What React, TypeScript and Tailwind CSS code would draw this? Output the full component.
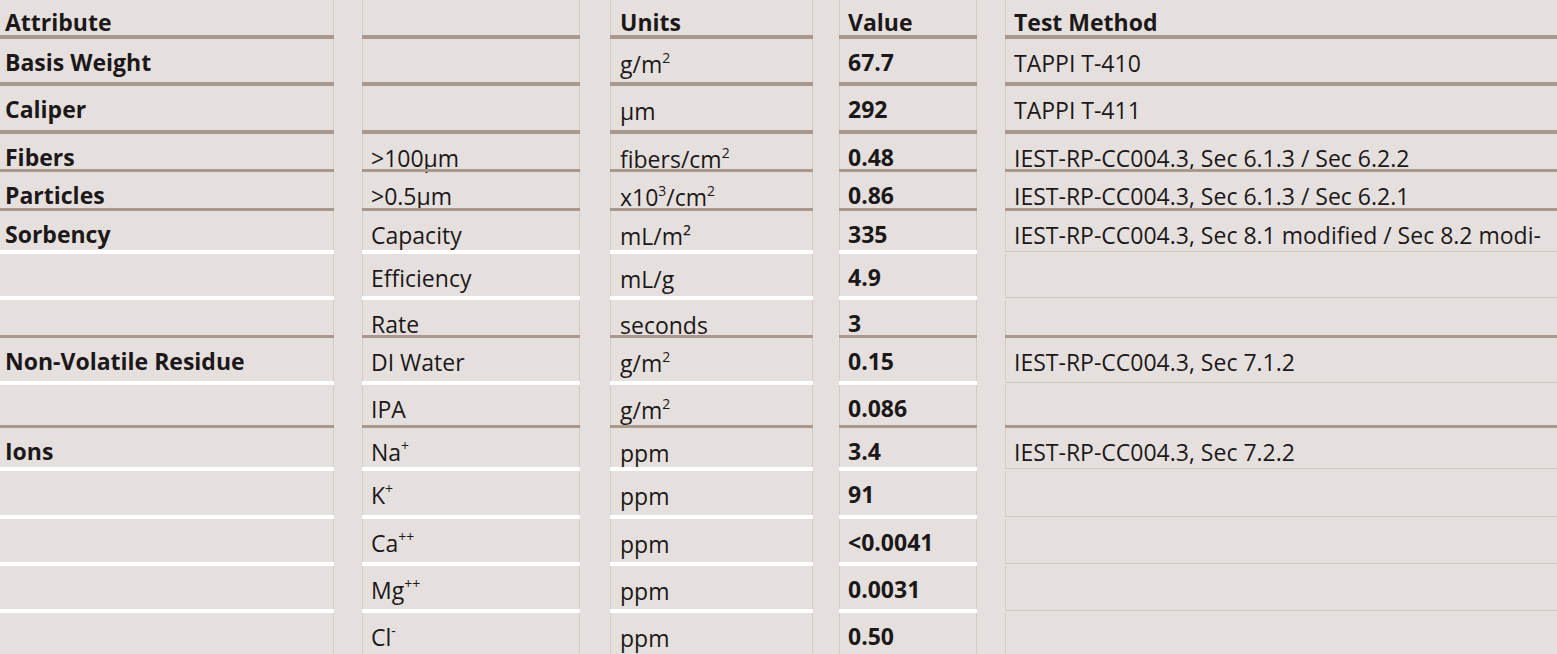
import React from "react";

type Sep = "b4" | "b3" | "w" | "none";

const Sup = ({ children }: { children: React.ReactNode }) => (
  <sup className="text-[14px] leading-none relative top-[-10px] align-baseline">{children}</sup>
);

const rows: { h: number; sep: Sep; header?: boolean; cells: React.ReactNode[] }[] = [
  { h: 35, sep: "b4", header: true, cells: ["Attribute", "", "Units", "Value", "Test Method"] },
  { h: 43, sep: "b4", cells: ["Basis Weight", "", <>g/m<Sup>2</Sup></>, "67.7", "TAPPI T-410"] },
  { h: 44, sep: "b4", cells: ["Caliper", "", "μm", "292", "TAPPI T-411"] },
  { h: 35, sep: "b3", cells: ["Fibers", ">100μm", <>fibers/cm<Sup>2</Sup></>, "0.48", "IEST-RP-CC004.3, Sec 6.1.3 / Sec 6.2.2"] },
  { h: 36, sep: "b3", cells: ["Particles", ">0.5μm", <>x10<Sup>3</Sup>/cm<Sup>2</Sup></>, "0.86", "IEST-RP-CC004.3, Sec 6.1.3 / Sec 6.2.1"] },
  { h: 39, sep: "w", cells: ["Sorbency", "Capacity", "mL/m²", "335", "IEST-RP-CC004.3, Sec 8.1 modified / Sec 8.2 modi-"] },
  { h: 42, sep: "w", cells: ["", "Efficiency", "mL/g", "4.9", ""] },
  { h: 35, sep: "b3", cells: ["", "Rate", "seconds", "3", ""] },
  { h: 43, sep: "w", cells: ["Non-Volatile Residue", "DI Water", <>g/m<Sup>2</Sup></>, "0.15", "IEST-RP-CC004.3, Sec 7.1.2"] },
  { h: 40, sep: "b3", cells: ["", "IPA", <>g/m<Sup>2</Sup></>, "0.086", ""] },
  { h: 39, sep: "w", cells: ["Ions", <>Na<Sup>+</Sup></>, "ppm", "3.4", "IEST-RP-CC004.3, Sec 7.2.2"] },
  { h: 44, sep: "w", cells: ["", <>K<Sup>+</Sup></>, "ppm", "91", ""] },
  { h: 43, sep: "w", cells: ["", <>Ca<Sup>++</Sup></>, "ppm", "<0.0041", ""] },
  { h: 43, sep: "w", cells: ["", <>Mg<Sup>++</Sup></>, "ppm", "0.0031", ""] },
  { h: 45, sep: "none", cells: ["", <>Cl<Sup>-</Sup></>, "ppm", "0.50", ""] },
];

const cols = [
  { w: "w-[334px] shrink-0", ml: "", pl: "pl-[5px]", bold: true, border: "border-r border-[#d3cbc6]", pt: "pt-[12px]" },
  { w: "w-[218px] shrink-0", ml: "ml-[28px]", pl: "pl-[8px]", bold: false, border: "border-x border-[#d3cbc6]", pt: "pt-[13px]" },
  { w: "w-[203px] shrink-0", ml: "ml-[30px]", pl: "pl-[9px]", bold: false, border: "border-x border-[#d3cbc6]", pt: "pt-[14px]" },
  { w: "w-[138px] shrink-0", ml: "ml-[26px]", pl: "pl-[8px]", bold: true, border: "border-x border-[#d3cbc6]", pt: "pt-[12px]" },
  { w: "flex-1 min-w-0", ml: "ml-[28px]", pl: "pl-[8px]", bold: false, border: "border-l border-[#d3cbc6]", pt: "pt-[13px]" },
];

function Separator({ sep, col }: { sep: Sep; col: number }) {
  if (sep === "none") return null;
  if (sep === "b4") return <div className="h-[4px] bg-[#a8988d]" />;
  if (sep === "b3") return <div className="h-[3px] bg-[#a8988d]" />;
  if (col === 4)
    return (
      <div className="h-[4px] pt-[1px]">
        <div className="h-px bg-[#cfc7c2]" />
      </div>
    );
  return <div className="h-[4px] bg-white" />;
}

export default function App() {
  return (
    <div
      className="w-[1557px] h-[654px] overflow-hidden bg-[#e5e0dd] text-[#1c1819]"
      style={{ fontFamily: '"Open Sans", "Noto Sans", sans-serif' }}
    >
      {rows.map((r, ri) => (
        <div key={ri} className="flex">
          {cols.map((c, ci) => {
            const bold = r.header || c.bold;
            const text = bold
              ? "font-bold text-[23px] leading-[23px]"
              : "text-[23px] leading-[23px]";
            const pt = r.header ? "pt-[11px]" : c.pt;
            return (
              <div key={ci} className={`${c.w} ${c.ml} flex flex-col`}>
                <div
                  className={`${c.border} ${c.pl} ${pt} ${text} whitespace-nowrap`}
                  style={{ height: r.h }}
                >
                  {r.cells[ci]}
                </div>
                <Separator sep={r.sep} col={ci} />
              </div>
            );
          })}
        </div>
      ))}
    </div>
  );
}
